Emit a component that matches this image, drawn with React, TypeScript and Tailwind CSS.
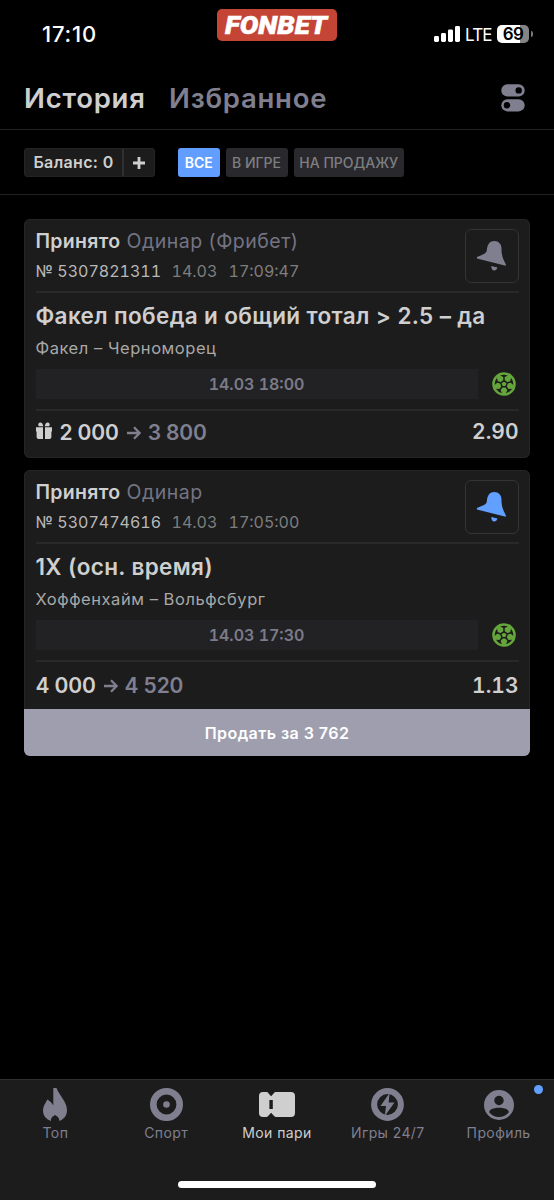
import { clsx } from "clsx";

type Tone = "muted" | "active";

interface Bet {
  id: string;
  type: string;
  date: string;
  time: string;
  outcome: string;
  event: string;
  start: string;
  stake: string;
  win: string;
  odds: string;
  freebet?: boolean;
  subscribed?: boolean;
  sellPrice?: string;
}

const bets: Bet[] = [
  {
    id: "5307821311",
    type: "Одинар (Фрибет)",
    date: "14.03",
    time: "17:09:47",
    outcome: "Факел победа и общий тотал > 2.5 – да",
    event: "Факел – Черноморец",
    start: "14.03 18:00",
    stake: "2 000",
    win: "3 800",
    odds: "2.90",
    freebet: true,
  },
  {
    id: "5307474616",
    type: "Одинар",
    date: "14.03",
    time: "17:05:00",
    outcome: "1X (осн. время)",
    event: "Хоффенхайм – Вольфсбург",
    start: "14.03 17:30",
    stake: "4 000",
    win: "4 520",
    odds: "1.13",
    subscribed: true,
    sellPrice: "3 762",
  },
];

function BellIcon({ tone }: { tone: Tone }) {
  return (
    <svg viewBox="0 0 32 32" className={clsx("h-8 w-8", tone === "active" ? "text-[#62a0ff]" : "text-[#7f7f8f]")} fill="currentColor">
      <path d="M10.8 10.5C11.2 4 14 1 18.3 1C22.8 1 25.6 4.2 25.5 9C25.4 14 26.6 18.5 29.8 24.2V25.8L.9 18.6V17C6 14.6 10.4 14 10.8 10.5Z" />
      <path d="M15.3 26L21.5 27.6C20.8 29.5 19.8 30.5 18.2 30.5C16.4 30.5 15.1 28.7 15.3 26Z" />
    </svg>
  );
}

function BallIcon() {
  const angles = [0, 72, 144, 216, 288];
  return (
    <svg viewBox="-12 -12 24 24" className="h-6 w-6">
      <circle r="11.8" fill="#64a63b" />
      <g fill="none" stroke="#1c1c1c" strokeWidth="1.5">
        <path d="M0-3.4L3.2-1.1L2 2.8H-2L-3.2-1.1Z" />
        {angles.map((a) => (
          <path key={a} transform={`rotate(${a})`} d="M0-3.4V-8" />
        ))}
      </g>
      <g fill="#1c1c1c">
        {angles.map((a) => (
          <path key={a} transform={`rotate(${a})`} d="M-3.8-8.6Q0-10 3.8-8.6L.8-6.9H-.8Z" />
        ))}
      </g>
    </svg>
  );
}

function GiftIcon() {
  return (
    <svg viewBox="0 0 16 18" className="mb-[5px] mr-2 h-[18px] w-4 text-[#cfcfcf]" fill="currentColor">
      <path d="M0 5.3H7V9.5H0ZM9 5.3H16V9.5H9ZM.6 9.5H7V17H2.6Q.6 17 .6 15ZM9 9.5H15.4V15Q15.4 17 13.4 17H9Z" />
      <path d="M2.7 4.3C1.6 2.3 2.6.5 4.3.5C6 .5 6.8 2 7.3 4.3ZM13.3 4.3C14.4 2.3 13.4.5 11.7.5C10 .5 9.2 2 8.7 4.3Z" />
    </svg>
  );
}

function ArrowIcon() {
  return (
    <svg viewBox="0 0 14 14" className="ml-2 mr-[7px] h-3.5 w-3.5 text-[#7f7f8f]" fill="none" stroke="currentColor" strokeWidth="2.3">
      <path d="M0 7H12.2M7 1.3L12.6 7L7 12.7" />
    </svg>
  );
}

function StatusBar() {
  return (
    <div className="flex h-[66px] shrink-0 text-white">
      <div className="w-[217px] pl-[42px] pt-[21px] text-[22px] font-medium leading-[26px] tracking-[0.8px]">
        17:10
      </div>
      <div className="mt-[9px] h-8 w-[120px] rounded-[5px] bg-[#c44435]">
        <svg viewBox="0 0 120 32" className="h-8 w-[120px]">
          <text x="8" y="25" textLength="102" lengthAdjust="spacingAndGlyphs" fill="#fff" stroke="#fff" strokeWidth=".5" className="font-[Roboto,sans-serif] text-[25px] font-black italic">
            FONBET
          </text>
        </svg>
      </div>
      <div className="ml-[97px] mt-[25px] flex h-[18px] items-center">
        <svg viewBox="0 0 26 16" className="h-4 w-[26px]" fill="currentColor">
          <rect x="0" y="10" width="5" height="6" rx="1.4" />
          <rect x="7" y="7" width="5" height="9" rx="1.4" />
          <rect x="14" y="3.5" width="5" height="12.5" rx="1.4" />
          <rect x="21" y="0" width="5" height="16" rx="1.4" />
        </svg>
        <span className="ml-[5px] w-[26px] pt-px text-[17px] leading-[18px] tracking-[-0.8px]">LTE</span>
        <div className="ml-1.5 h-[18px] w-8 rounded-[5px] bg-[linear-gradient(90deg,#fff_72%,#858585_72%)] text-center text-[17px] font-semibold leading-[18px] tracking-[-0.6px] text-black">
          69
        </div>
        <div className="ml-0.5 h-1.5 w-[2px] rounded-r-full bg-[#777]" />
      </div>
    </div>
  );
}

function Header() {
  return (
    <header className="flex h-16 shrink-0 items-center justify-between border-b border-[#222] pl-6 pr-[29px]">
      <div className="flex gap-6 text-[27.5px] font-semibold leading-8 tracking-[0.75px]">
        <span className="w-[121px] whitespace-nowrap text-[#cfcfcf]">История</span>
        <span className="whitespace-nowrap text-[#7f7f8f]">Избранное</span>
      </div>
      <svg viewBox="0 0 24 28" className="h-7 w-6" fill="#7f7f8f">
        <rect x=".3" y=".3" width="23.4" height="12.2" rx="6.1" />
        <rect x=".3" y="15.2" width="23.4" height="12.2" rx="6.1" />
        <circle cx="17.7" cy="6.4" r="3.2" fill="#000" />
        <circle cx="6" cy="21.3" r="3.2" fill="#000" />
      </svg>
    </header>
  );
}

function Filters() {
  return (
    <div className="flex h-[65px] shrink-0 items-center border-b border-[#222] px-6 pt-px">
      <div className="flex h-[29px] w-[131px] rounded-[3px] border border-[#242425] bg-[#1c1c1c] text-[#cfcfcf]">
        <span className="flex w-[99px] items-center justify-center whitespace-nowrap border-r-2 border-[#303032] pb-0.5 text-[16px] font-semibold tracking-[0.35px]">
          Баланс: 0
        </span>
        <span className="flex flex-1 items-center justify-center">
          <svg viewBox="0 0 12 12" className="h-3 w-3" stroke="currentColor" strokeWidth="2.8">
            <path d="M6 0V12M0 6H12" />
          </svg>
        </span>
      </div>
      <div className="ml-[23px] flex h-[29px] gap-1.5 text-[14px] font-medium leading-[29px] text-[#7e7e80]">
        <button className="w-[41.5px] rounded-[3px] bg-[#629eff] font-semibold text-white">ВСЕ</button>
        <button className="w-[62px] whitespace-nowrap rounded-[3px] bg-[#29292d]">В ИГРЕ</button>
        <button className="w-[110.5px] whitespace-nowrap rounded-[3px] bg-[#29292d]">НА ПРОДАЖУ</button>
      </div>
    </div>
  );
}

function BetCard({ bet }: { bet: Bet }) {
  return (
    <article className={clsx("flex flex-col overflow-hidden rounded-[6px] bg-[#1c1c1c] shadow-[inset_0_0_0_1px_#252527]", bet.sellPrice ? "h-[286px]" : "h-[239px]")}>
      <div className="px-[11.5px]">
        <div className="flex h-[74px] justify-between border-b-2 border-[#29292b]">
          <div className="pt-[10px]">
            <div className="flex gap-1.5 whitespace-nowrap text-[19.5px] leading-6">
              <span className="w-[85px] font-semibold tracking-[0.3px] text-[#cfcfcf]">Принято</span>
              <span className="tracking-[0.5px] text-[#747483]">{bet.type}</span>
            </div>
            <div className="mt-2 flex whitespace-nowrap text-[16px] leading-5 tabular-nums">
              <span className="w-[136px] text-[#b8b8b8]">№ {bet.id}</span>
              <span className="w-[57px] text-[#7e7e7e]">{bet.date}</span>
              <span className="text-[#7e7e7e]">{bet.time}</span>
            </div>
          </div>
          <div className="mt-2.5 flex h-[54px] w-[54px] items-center justify-center rounded-[6px] border border-[#343435] pb-px">
            <BellIcon tone={bet.subscribed ? "active" : "muted"} />
          </div>
        </div>
        <h2 className="mt-[7px] whitespace-nowrap text-[22.5px] font-semibold leading-8 tracking-[0.36px] text-[#cfcfcf]">{bet.outcome}</h2>
        <p className="mt-1 text-[16.5px] leading-6 tracking-[0.54px] text-[#a8a8a8]">{bet.event}</p>
        <div className="mt-[9px] flex items-center justify-between pr-[3px]">
          <div className="h-[30px] w-[442px] bg-[#222225] text-center text-[16px] font-semibold leading-[30px] tabular-nums text-[#7b7b89]">{bet.start}</div>
          <BallIcon />
        </div>
        <div className={clsx("mt-2.5 flex items-center justify-between border-t-2 border-[#29292b] text-[21px] font-semibold text-[#cfcfcf]", bet.sellPrice ? "h-[49px]" : "h-[43px]")}>
          <div className={clsx("flex items-center tracking-[-0.15px]", bet.freebet && "pt-[3px]")}>
            {bet.freebet && <GiftIcon />}
            <span>{bet.stake}</span>
            <ArrowIcon />
            <span className="text-[#7f7f8f]">{bet.win}</span>
          </div>
          <span className="tabular-nums">{bet.odds}</span>
        </div>
      </div>
      {bet.sellPrice && (
        <button className="mt-auto h-[47px] bg-[#9e9eae] text-[16px] font-semibold tracking-[0.45px] text-white">Продать за {bet.sellPrice}</button>
      )}
    </article>
  );
}

function FlameIcon() {
  return (
    <svg viewBox="0 0 24 33" className="h-[33px] w-6" fill="currentColor">
      <path d="M10.3 0H13.5C15.8 6.8 24 13.5 24 22.2C24 28 20.5 31.2 16.3 33C16.3 31 15.6 29.8 14.6 28.8L12 27L9.5 28.8C8.5 29.8 7.9 31 7.9 33C3.5 31.2 0 28 0 22.2C0 18 2.4 15.5 4.4 11.5C7 13 8.7 14.6 10.3 17.5Z" />
    </svg>
  );
}

function SportIcon() {
  return (
    <svg viewBox="0 0 33 33" className="h-[33px] w-[33px]">
      <circle cx="16.5" cy="16.5" r="13.2" fill="none" stroke="currentColor" strokeWidth="6.6" />
      <circle cx="16.5" cy="16.5" r="3.3" fill="currentColor" />
    </svg>
  );
}

function TicketIcon() {
  return (
    <svg viewBox="0 0 36 25" className="h-[25px] w-9" fill="currentColor" fillRule="evenodd">
      <path d="M4 0H7.5Q8.8 0 9.6 1.4L12.1 4.2L14.6 1.4Q15.6 0 16.8 0H32Q36 0 36 4V21Q36 25 32 25H16.8Q15.6 25 14.6 23.6L12.1 20.8L9.6 23.6Q8.8 25 7.5 25H4Q0 25 0 21V4Q0 0 4 0ZM10.4 8V17H13.8V8Z" />
    </svg>
  );
}

function GamesIcon() {
  return (
    <svg viewBox="0 0 33 33" className="h-[33px] w-[33px]">
      <circle cx="16.5" cy="16.5" r="13.4" fill="none" stroke="currentColor" strokeWidth="6" />
      <path fill="currentColor" d="M18.5 5L9.5 18H15L13.8 28L23.5 14.5H17.7Z" />
    </svg>
  );
}

function ProfileIcon() {
  return (
    <svg viewBox="0 0 30 30" className="h-[30px] w-[30px]">
      <circle cx="15" cy="15" r="15" fill="currentColor" />
      <circle cx="15" cy="10.5" r="4.7" fill="#1c1c1c" />
      <path d="M5.2 22.2C5.2 19.3 10 17.8 15 17.8S24.8 19.3 24.8 22.2C22.6 25.3 19 27 15 27S7.4 25.3 5.2 22.2Z" fill="#1c1c1c" />
    </svg>
  );
}

const tabs = [
  { label: "Топ", icon: <FlameIcon /> },
  { label: "Спорт", icon: <SportIcon /> },
  { label: "Мои пари", icon: <TicketIcon />, active: true },
  { label: "Игры 24/7", icon: <GamesIcon /> },
  { label: "Профиль", icon: <ProfileIcon />, dot: true },
];

function TabBar() {
  return (
    <nav className="mt-auto h-[121px] border-t border-[#303031] bg-[#1c1c1c]">
      <div className="grid h-[101px] grid-cols-5">
        {tabs.map((tab) => (
          <div key={tab.label} className={clsx("relative flex flex-col items-center pt-2", tab.active ? "text-[#cfcfcf]" : "text-[#7f7f8f]")}>
            <div className="flex h-[33px] items-center">{tab.icon}</div>
            <span className="mt-[2px] whitespace-nowrap text-[14px] leading-5 tracking-[0.4px]">{tab.label}</span>
            {tab.dot && <span className="absolute right-[11px] top-[5px] h-[9px] w-[9px] rounded-full bg-[#62a0ff]" />}
          </div>
        ))}
      </div>
      <div className="mx-auto h-[7px] w-[198px] rounded-full bg-white" />
    </nav>
  );
}

export default function App() {
  return (
    <div className="flex h-[1200px] w-[554px] flex-col overflow-hidden bg-black font-[Inter,'Noto_Sans',sans-serif]">
      <StatusBar />
      <Header />
      <Filters />
      <main className="flex flex-col gap-3 px-6 pt-6">
        {bets.map((bet) => (
          <BetCard key={bet.id} bet={bet} />
        ))}
      </main>
      <TabBar />
    </div>
  );
}
